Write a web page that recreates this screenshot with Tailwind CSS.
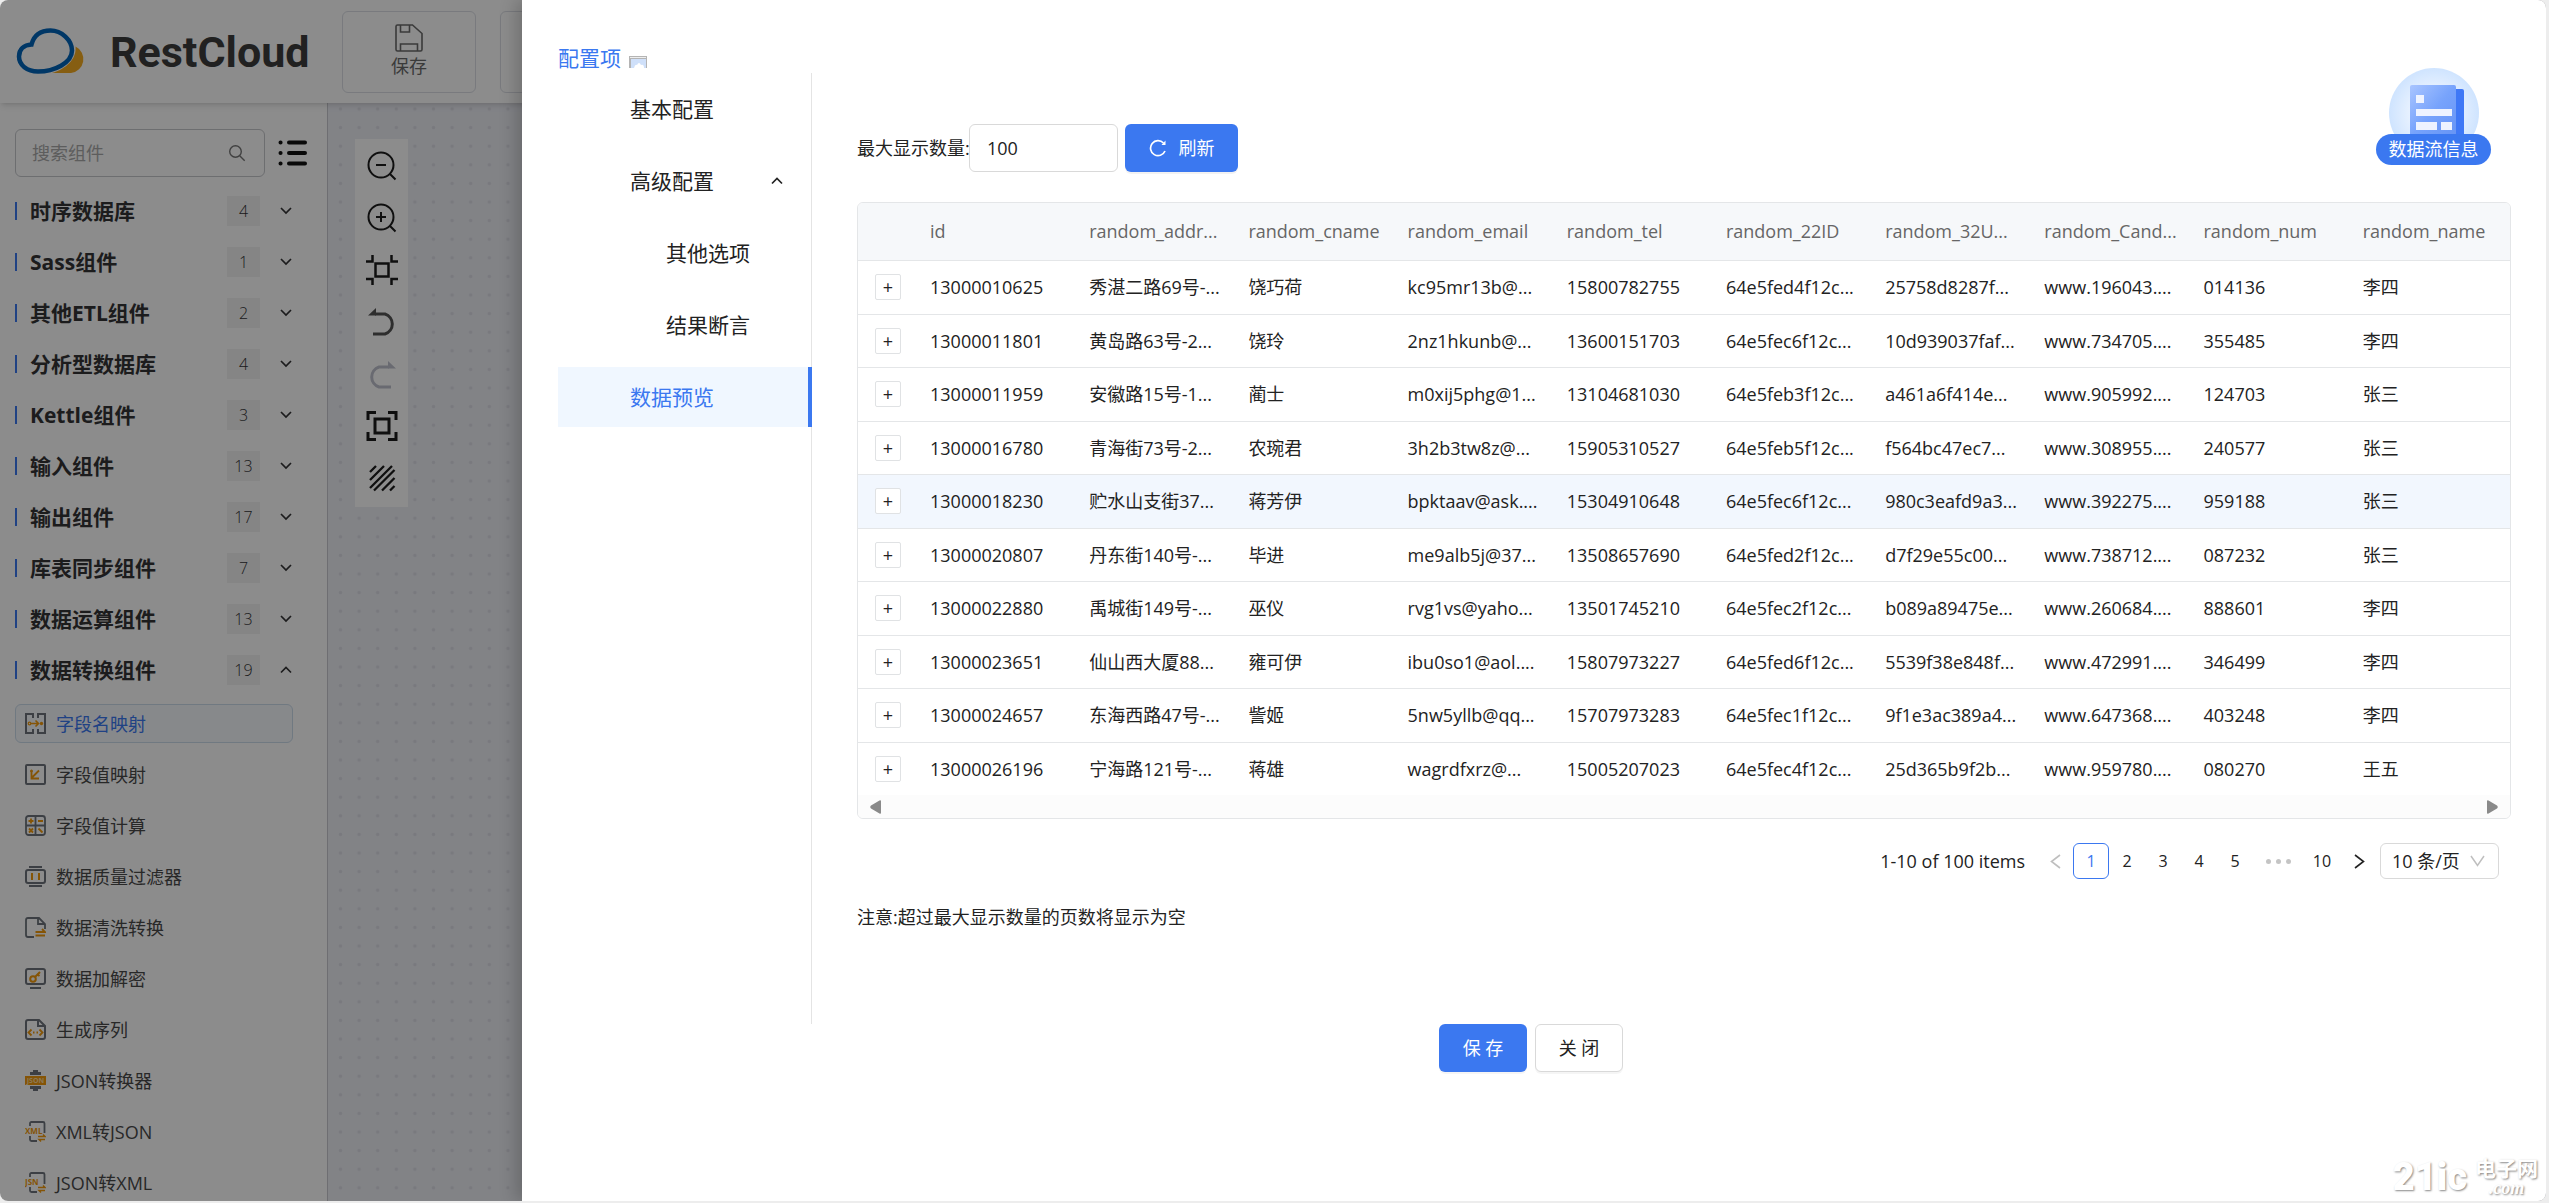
<!DOCTYPE html>
<html lang="zh-CN">
<head>
<meta charset="utf-8">
<title>RestCloud</title>
<script src="https://cdn.jsdelivr.net/npm/@tailwindcss/browser@4"></script>
</head>
<body class="h-screen overflow-hidden bg-[#ededed] pr-[3px] pb-[2px] font-['Open_Sans','Noto_Sans_CJK_SC',sans-serif] text-[18px] leading-7 text-[#222]">
<svg class="hidden">
  <symbol id="down" viewBox="0 0 12 12"><path d="M1 3l5 5 5-5" fill="none" stroke="currentColor" stroke-width="1.700"/></symbol>
  <symbol id="up" viewBox="0 0 12 12"><path d="M1 8.500l5-5 5 5" fill="none" stroke="currentColor" stroke-width="1.700"/></symbol>
</svg>
<div class="relative h-full overflow-hidden rounded-lg bg-white">

  <!-- Application behind the drawer -->
  <div class="flex h-full flex-col">
    <header class="z-10 flex h-[103px] shrink-0 items-center bg-white shadow-md">
      <a href="#" class="flex w-[342px] items-center pl-4">
        <svg class="h-[50px] w-[72px] shrink-0" viewBox="0 0 72 50">
          <path d="M36 46h19a14 14 0 0 0 4.500-26.500C61 32 50 42 36 46z" fill="#f5ab22"/>
          <path d="M22 44.500C11 44.500 3 38 3 29.500 3 22 8 18 15.500 17.500 18 8 25 3.500 34.500 3.500c11 0 21.500 9.500 21.500 20C56 36 38 44.500 22 44.500z" fill="#fff" stroke="#0064bb" stroke-width="4.500"/>
        </svg>
        <span class="ml-[22px] font-['Roboto',sans-serif] text-[43px] leading-[50px] font-bold text-[#3c3c3c]">RestCloud</span>
      </a>
      <button class="flex h-[82px] w-[134px] shrink-0 flex-col items-center justify-center rounded-md border border-[#dcdfe6] text-[#6b6b6b]">
        <svg class="h-7 w-7" viewBox="0 0 28 28" fill="none" stroke="currentColor" stroke-width="1.600"><path d="M1 2.500Q1 1 2.500 1h15L27 9.500V25.500Q27 27 25.500 27h-23Q1 27 1 25.500zM5.500 1v7h9V1M5.500 27v-7h17v7"/></svg>
        保存
      </button>
      <button class="ml-6 h-[82px] w-[134px] shrink-0 rounded-md border border-[#dcdfe6]" aria-label="操作"></button>
    </header>
    <div class="flex min-h-0 flex-1">
      <aside class="w-[328px] shrink-0 overflow-hidden border-r border-[#c8c9cf] bg-white px-[15px] pt-[26px]">
        <div class="flex items-center gap-[13px]">
          <label class="flex h-12 w-[250px] items-center rounded-md border border-[#c6c8cc] pr-[18px] pl-4 text-[#777]">
            <input type="text" placeholder="搜索组件" aria-label="搜索组件" class="min-w-0 flex-1 outline-none placeholder:text-[#aaa]">
            <svg class="h-[18px] w-[18px]" viewBox="0 0 18 18" fill="none" stroke="currentColor" stroke-width="1.400"><circle cx="7.500" cy="7.500" r="5.800"/><path d="M11.700 11.700l5 5"/></svg>
          </label>
          <button aria-label="列表"><svg class="h-[26px] w-[29px]" viewBox="0 0 29 26" stroke="#111" stroke-width="4" stroke-linecap="round"><path d="M2.500 2.500h.1M11 2.500h16M2.500 13h.1M11 13h16M2.500 23.500h.1M11 23.500h16"/></svg></button>
        </div>
        <ul class="mt-2 text-[21px] font-bold text-[#343436] [&>li]:flex [&>li]:h-[51px] [&>li]:items-center [&_b]:mr-[13px] [&_b]:h-[18px] [&_b]:w-[2px] [&_b]:bg-[#3b78f0] [&_i]:ml-auto [&_i]:mr-5 [&_i]:w-[33px] [&_i]:bg-[#f2f2f2] [&_i]:text-center [&_i]:text-[16px] [&_i]:leading-[30px] [&_i]:font-light [&_i]:not-italic [&_svg]:mr-5 [&_svg]:h-3 [&_svg]:w-3">
          <li><b></b>时序数据库<i>4</i><svg><use href="#down"/></svg></li>
          <li><b></b>Sass组件<i>1</i><svg><use href="#down"/></svg></li>
          <li><b></b>其他ETL组件<i>2</i><svg><use href="#down"/></svg></li>
          <li><b></b>分析型数据库<i>4</i><svg><use href="#down"/></svg></li>
          <li><b></b>Kettle组件<i>3</i><svg><use href="#down"/></svg></li>
          <li><b></b>输入组件<i>13</i><svg><use href="#down"/></svg></li>
          <li><b></b>输出组件<i>17</i><svg><use href="#down"/></svg></li>
          <li><b></b>库表同步组件<i>7</i><svg><use href="#down"/></svg></li>
          <li><b></b>数据运算组件<i>13</i><svg><use href="#down"/></svg></li>
          <li><b></b>数据转换组件<i>19</i><svg><use href="#up"/></svg></li>
        </ul>
        <ul class="mt-[9px] flex flex-col gap-3 text-[#4a4a4a] [&>li]:flex [&>li]:h-[39px] [&>li]:w-[278px] [&>li]:items-center [&>li]:gap-[10px] [&>li]:rounded-md [&>li]:border [&>li]:border-transparent [&>li]:px-[9px] [&_svg]:h-[21px] [&_svg]:w-[21px]">
          <li class="border-[#ccdcec]! bg-[#f6f9fd] text-[#3b78f0]"><svg viewBox="0 0 21 21" fill="none" stroke="#6d747c" stroke-width="2"><path d="M8 5V1H1v19h7v-4M13 5V1h7v19h-7v-4"/><path d="M5.500 10.500h7M10.500 7.500l3 3-3 3" stroke="#f29a0c" stroke-width="1.600"/><circle cx="4.500" cy="10.500" r="1.300" stroke="#f29a0c" stroke-width="1.200"/><circle cx="16.500" cy="10.500" r="1.700" fill="#f29a0c" stroke="none"/></svg>字段名映射</li>
          <li><svg viewBox="0 0 21 21" fill="none" stroke="#6d747c" stroke-width="2"><rect x="1" y="1" width="19" height="19" rx="1"/><path d="M6.500 14L14 6.500M6.500 7v7.500H14" stroke="#f29a0c" stroke-width="1.800"/><circle cx="6.500" cy="7" r="1" fill="#f29a0c" stroke="#f29a0c" stroke-width="1"/></svg>字段值映射</li>
          <li><svg viewBox="0 0 21 21" fill="none" stroke="#6d747c" stroke-width="1.800"><rect x="1" y="1" width="19" height="19" rx="2.500"/><path d="M10.500 1v19M1 10.500h19"/><path d="M3.500 6h5M6 3.500v5M13 6h5M4 13.500l4 4M8 13.500l-4 4M13.500 13.500l4 4" stroke="#f29a0c"/></svg>字段值计算</li>
          <li><svg viewBox="0 0 21 21" fill="none" stroke="#6d747c" stroke-width="2"><path d="M4 1h13M4 20h13"/><rect x="1" y="4" width="19" height="13" rx="2"/><path d="M7 7v7M14 7v7" stroke="#f29a0c"/></svg>数据质量过滤器</li>
          <li><svg viewBox="0 0 21 21" fill="none" stroke="#6d747c" stroke-width="1.800"><path d="M9 20H3q-2 0-2-2V3q0-2 2-2h11l6 6v5M13 1v6h7"/><path d="M10.500 15H20l-3-3M20 18.500h-9.500" stroke="#f29a0c"/></svg>数据清洗转换</li>
          <li><svg viewBox="0 0 21 21" fill="none" stroke="#6d747c" stroke-width="2"><rect x="1" y="1" width="19" height="15" rx="2"/><path d="M5 20h11"/><circle cx="8" cy="11" r="2.800" stroke="#f29a0c"/><path d="M10 9l5-5M12.500 6.500l2 1.500" stroke="#f29a0c"/></svg>数据加解密</li>
          <li><svg viewBox="0 0 21 21" fill="none" stroke="#6d747c" stroke-width="2"><path d="M3 1h11l6 6v11q0 2-2 2H3q-2 0-2-2V3q0-2 2-2zM13 1v6h7"/><path d="M6.500 10.500l-3 3 3 3M14.500 10.500l3 3-3 3M8 13.500h1.500M11.500 13.500H13" stroke="#f29a0c" stroke-width="1.800"/></svg>生成序列</li>
          <li><svg viewBox="0 0 21 21"><path d="M8 0h5v2h3v3H5V2h3zM5 16h11v3h-3v2H8v-2H5z" fill="#6d747c"/><path d="M0 6h21v9H0z" fill="#f29a0c"/><text x="10.500" y="13.200" text-anchor="middle" font-size="7" font-weight="bold" fill="#ffdca0">JSON</text></svg>JSON转换器</li>
          <li><svg viewBox="0 0 21 21" fill="none" stroke="#6d747c" stroke-width="1.800"><path d="M5 5V2.500Q5 1 6.500 1H18q1.500 0 1.500 1.500V12M5 15v3.500Q5 20 6.500 20H12"/><path d="M13 15.500h7l-2-2M20 18.500h-6l2 2" stroke="#f29a0c" stroke-width="1.400"/><text x="0" y="13" font-size="8" font-weight="bold" fill="#f29a0c" stroke="none">XML</text></svg>XML转JSON</li>
          <li><svg viewBox="0 0 21 21" fill="none" stroke="#6d747c" stroke-width="1.800"><path d="M5 5V2.500Q5 1 6.500 1H18q1.500 0 1.500 1.500V12M5 15v3.500Q5 20 6.500 20H12"/><path d="M13 15.500h7l-2-2M20 18.500h-6l2 2" stroke="#f29a0c" stroke-width="1.400"/><text x="0" y="13" font-size="8" font-weight="bold" fill="#f29a0c" stroke="none">JSN</text></svg>JSON转XML</li>
        </ul>
      </aside>
      <main class="relative flex-1 bg-[#edeef5]">
        <svg class="absolute inset-0 h-full w-full"><defs><pattern id="dots" x="3.200" y="-3.300" width="18.600" height="18.600" patternUnits="userSpaceOnUse"><circle cx="9.300" cy="9.300" r="1.700" fill="#dcdde5"/></pattern></defs><rect width="100%" height="100%" fill="url(#dots)"/></svg>
        <div class="absolute top-9 left-[27px] flex w-[53px] flex-col items-center gap-[22px] bg-white pt-3 pb-[14px] text-[#1c1c1c] [&_svg]:h-[30px] [&_svg]:w-[32px]">
          <button aria-label="缩小"><svg viewBox="0 0 32 30" fill="none" stroke="currentColor" stroke-width="2"><circle cx="15" cy="14" r="12.500"/><path d="M10 14h10M23.500 22.500l6 6"/></svg></button>
          <button aria-label="放大"><svg viewBox="0 0 32 30" fill="none" stroke="currentColor" stroke-width="2"><circle cx="15" cy="14" r="12.500"/><path d="M10 14h10M15 9v10M23.500 22.500l6 6"/></svg></button>
          <button aria-label="适应画布"><svg viewBox="0 0 32 30" fill="none" stroke="currentColor" stroke-width="2.500"><rect x="9.500" y="8.500" width="13" height="13"/><path d="M0 6.500h6.500V0M32 6.500h-6.500V0M0 24h6.500v6M32 24h-6.500v6"/></svg></button>
          <button aria-label="撤销"><svg viewBox="0 0 32 30" class="text-[#555]"><path d="M7 27h12a10.500 10.500 0 0 0 0-20H9" fill="none" stroke="currentColor" stroke-width="3"/><path d="M2 8.500L10 1v7.500z" fill="currentColor"/></svg></button>
          <button aria-label="重做"><svg viewBox="0 0 32 30" class="text-[#bfc2ce]"><path d="M25 28H13a10.500 10.500 0 0 1 0-20h10" fill="none" stroke="currentColor" stroke-width="3"/><path d="M30 9.500L22 2v7.500z" fill="currentColor"/></svg></button>
          <button aria-label="全屏"><svg viewBox="0 0 32 30" fill="none" stroke="currentColor" stroke-width="3"><rect x="9" y="8" width="14" height="14"/><path d="M2 9V1.500h8M30 9V1.500h-8M2 21v7.500h8M30 21v7.500h-8"/></svg></button>
          <button aria-label="网格"><svg viewBox="0 0 32 30" fill="none" stroke="currentColor" stroke-width="2.300"><path d="M4 9l6-6M4 17L18 3M4 25L26 3M8 27.500L28.500 7M16 27.500L28.500 15M24 27.500l4.500-4.500"/></svg></button>
        </div>
      </main>
    </div>
  </div>
  <div class="absolute inset-0 z-20 bg-black/45"></div>

  <!-- Configuration drawer -->
  <section class="absolute inset-y-0 right-0 left-[522px] z-30 bg-white pl-9 shadow-[-6px_0_16px_rgba(0,0,0,0.2)]">
    <h2 class="flex items-center gap-2 pt-[43px] text-[21px] leading-[30px] text-[#3b78f0]">配置项
      <svg class="mt-2 h-3 w-[18px]" viewBox="0 0 18 12"><path d="M0 0h18v12H0z" fill="#b4b4b4"/><path d="M2 3h15v9H2z" fill="#cfe0fa"/><path d="M5 12q1-4 3-3 2-4 4 0 3-1 3 3z" fill="#fff"/><path d="M1 1h16v1H1z" fill="#eee"/></svg>
    </h2>
    <div class="flex min-h-[951px]">
      <nav class="w-[254px] shrink-0 border-r border-[#e4e4e4] pt-1.5 text-[21px]">
        <ul class="-mr-px flex flex-col gap-3 [&_a]:flex [&_a]:h-[60px] [&_a]:items-center [&_a]:pl-[72px]">
          <li><a href="#">基本配置</a></li>
          <li><a href="#">高级配置<svg class="mr-[29px] ml-auto h-3 w-3"><use href="#up"/></svg></a></li>
          <li><a href="#" class="pl-[108px]!">其他选项</a></li>
          <li><a href="#" class="pl-[108px]!">结果断言</a></li>
          <li><a href="#" class="border-r-4 border-[#3b78f0] bg-[#f0f7ff] text-[#3b78f0]">数据预览</a></li>
        </ul>
      </nav>
      <div class="min-w-0 flex-1 pt-[51px] pr-[35px] pl-[45px]">
        <div class="flex items-center">
          <label for="max" class="w-[112px] whitespace-nowrap">最大显示数量:</label>
          <input id="max" type="text" value="100" class="h-12 w-[149px] rounded-md border border-[#d9d9d9] px-[17px]">
          <button class="ml-[7px] flex h-12 w-[113px] items-center justify-center gap-3 rounded-md bg-[#3b78f0] text-white shadow-[0_2px_0_rgba(0,0,0,0.05)]">
            <svg class="h-[18px] w-[18px]" viewBox="0 0 18 18" fill="none" stroke="currentColor" stroke-width="1.700"><path d="M16 12A7.500 7.500 0 1 1 14.500 4"/><path d="M16.500 1.500V6h-4z" fill="currentColor" stroke="none"/></svg>刷新
          </button>
        </div>
        <div class="mt-[30px] overflow-hidden rounded-md border border-[#e4e6e8]">
          <table class="w-full table-fixed text-left whitespace-nowrap [&_td]:px-3 [&_th]:px-3 [&_th]:font-normal [&_tbody>tr]:h-[53px] [&_tbody>tr:nth-child(odd)]:h-[54px] [&_tbody>tr]:border-t [&_tbody>tr]:border-[#e4e6e8] [&_button]:mx-auto [&_button]:flex [&_button]:h-[26px] [&_button]:w-[26px] [&_button]:items-center [&_button]:justify-center [&_button]:rounded-xs [&_button]:border [&_button]:border-[#e0e2e4] [&_button]:bg-white">
            <thead class="bg-[#f6f8fa] text-[#666]">
              <tr class="h-[57px]"><th class="w-[60px]"></th><th>id</th><th>random_addr...</th><th>random_cname</th><th>random_email</th><th>random_tel</th><th>random_22ID</th><th>random_32U...</th><th>random_Cand...</th><th>random_num</th><th>random_name</th></tr>
            </thead>
            <tbody>
              <tr><td><button>+</button></td><td>13000010625</td><td>秀湛二路69号-...</td><td>饶巧荷</td><td>kc95mr13b@...</td><td>15800782755</td><td>64e5fed4f12c...</td><td>25758d8287f...</td><td>www.196043....</td><td>014136</td><td>李四</td></tr>
              <tr><td><button>+</button></td><td>13000011801</td><td>黄岛路63号-2...</td><td>饶玲</td><td>2nz1hkunb@...</td><td>13600151703</td><td>64e5fec6f12c...</td><td>10d939037faf...</td><td>www.734705....</td><td>355485</td><td>李四</td></tr>
              <tr><td><button>+</button></td><td>13000011959</td><td>安徽路15号-1...</td><td>蔺士</td><td>m0xij5phg@1...</td><td>13104681030</td><td>64e5feb3f12c...</td><td>a461a6f414e...</td><td>www.905992....</td><td>124703</td><td>张三</td></tr>
              <tr><td><button>+</button></td><td>13000016780</td><td>青海街73号-2...</td><td>农琬君</td><td>3h2b3tw8z@...</td><td>15905310527</td><td>64e5feb5f12c...</td><td>f564bc47ec7...</td><td>www.308955....</td><td>240577</td><td>张三</td></tr>
              <tr class="bg-[#f2f7fe]"><td><button>+</button></td><td>13000018230</td><td>贮水山支街37...</td><td>蒋芳伊</td><td>bpktaav@ask....</td><td>15304910648</td><td>64e5fec6f12c...</td><td>980c3eafd9a3...</td><td>www.392275....</td><td>959188</td><td>张三</td></tr>
              <tr><td><button>+</button></td><td>13000020807</td><td>丹东街140号-...</td><td>毕进</td><td>me9alb5j@37...</td><td>13508657690</td><td>64e5fed2f12c...</td><td>d7f29e55c00...</td><td>www.738712....</td><td>087232</td><td>张三</td></tr>
              <tr><td><button>+</button></td><td>13000022880</td><td>禹城街149号-...</td><td>巫仪</td><td>rvg1vs@yaho...</td><td>13501745210</td><td>64e5fec2f12c...</td><td>b089a89475e...</td><td>www.260684....</td><td>888601</td><td>李四</td></tr>
              <tr><td><button>+</button></td><td>13000023651</td><td>仙山西大厦88...</td><td>雍可伊</td><td>ibu0so1@aol....</td><td>15807973227</td><td>64e5fed6f12c...</td><td>5539f38e848f...</td><td>www.472991....</td><td>346499</td><td>李四</td></tr>
              <tr><td><button>+</button></td><td>13000024657</td><td>东海西路47号-...</td><td>訾姬</td><td>5nw5yllb@qq...</td><td>15707973283</td><td>64e5fec1f12c...</td><td>9f1e3ac389a4...</td><td>www.647368....</td><td>403248</td><td>李四</td></tr>
              <tr><td><button>+</button></td><td>13000026196</td><td>宁海路121号-...</td><td>蒋雄</td><td>wagrdfxrz@...</td><td>15005207023</td><td>64e5fec4f12c...</td><td>25d365b9f2b...</td><td>www.959780....</td><td>080270</td><td>王五</td></tr>
            </tbody>
          </table>
          <div class="flex h-[23px] items-center justify-between bg-[#fcfcfc] px-3 text-[#8a8a8a]">
            <svg class="h-[14px] w-[11px]" viewBox="0 0 11 14"><path d="M11 1.500v11q0 2-1.500 1L1 8.500Q-.5 7 1 5.500L9.500.5Q11-.5 11 1.500z" fill="currentColor"/></svg>
            <svg class="h-[14px] w-[11px]" viewBox="0 0 11 14"><path d="M0 1.500v11q0 2 1.500 1L10 8.500q1.500-1.500 0-3L1.500.5Q0-.5 0 1.500z" fill="currentColor"/></svg>
          </div>
        </div>
        <div class="mt-6 flex h-9 items-center justify-end pr-3">
          <span class="mr-3">1-10 of 100 items</span>
          <div class="flex h-9 text-[16px] [&>button]:flex [&>button]:w-9 [&>button]:items-center [&>button]:justify-center [&_svg]:h-[15px] [&_svg]:w-[11px]">
            <button aria-label="上一页" class="text-[#bfbfbf]"><svg viewBox="0 0 11 15" fill="none" stroke="currentColor" stroke-width="1.600"><path d="M10 1L1.500 7.500 10 14"/></svg></button>
            <button class="rounded-md border border-[#3b78f0] text-[#3b78f0]">1</button>
            <button>2</button><button>3</button><button>4</button><button>5</button>
            <span class="flex w-[50px] items-center justify-center gap-[5px] [&>i]:h-[5px] [&>i]:w-[5px] [&>i]:rounded-full [&>i]:bg-[#c4c4c4]"><i></i><i></i><i></i></span>
            <button class="w-[38px]!">10</button>
            <button aria-label="下一页"><svg viewBox="0 0 11 15" fill="none" stroke="currentColor" stroke-width="1.600"><path d="M1 1l8.500 6.500L1 14"/></svg></button>
          </div>
          <div class="relative ml-[3px]">
            <select aria-label="每页条数" class="block h-9 w-[119px] appearance-none rounded-md border border-[#d9d9d9] bg-white pl-[11px] leading-7"><option>10 条/页</option></select>
            <svg class="pointer-events-none absolute top-3 right-[14px] h-3 w-[15px] text-[#bfbfbf]" viewBox="0 0 15 12" fill="none" stroke="currentColor" stroke-width="1.500"><path d="M1 1l6.500 9.500L14 1"/></svg>
          </div>
        </div>
        <p class="mt-6">注意:超过最大显示数量的页数将显示为空</p>
      </div>
    </div>
    <footer class="flex justify-center gap-2 pr-[42px] [&>button]:h-12 [&>button]:w-[88px] [&>button]:rounded-md [&>button]:shadow-[0_2px_0_rgba(0,0,0,0.04)]">
      <button class="bg-[#3b78f0] text-white">保 存</button>
      <button class="border border-[#d9d9d9] bg-white">关 闭</button>
    </footer>

    <button class="absolute top-[68px] right-[55px] flex w-[115px] flex-col items-center">
      <svg class="h-[66px] w-[90px]" viewBox="0 0 90 66">
        <defs>
          <radialGradient id="halo"><stop offset=".4" stop-color="#eef5ff"/><stop offset="1" stop-color="#cfe4ff"/></radialGradient>
          <linearGradient id="sheet" x1="0" y1="0" x2="1" y2="1"><stop offset="0" stop-color="#a9c5ff"/><stop offset=".5" stop-color="#77a3fc"/><stop offset="1" stop-color="#6694f5"/></linearGradient>
        </defs>
        <circle cx="45" cy="45" r="45" fill="url(#halo)"/>
        <rect x="60" y="21" width="15" height="50" rx="2" fill="#3f78f6"/>
        <rect x="21" y="17" width="46" height="52" rx="2" fill="url(#sheet)"/>
        <path d="M27 27h8v8h-8zM27 41h36v7H27zM27 54h21v8H27zM52 54h11v8H52z" fill="#eef3ff"/>
      </svg>
      <span class="h-[31px] w-full rounded-full bg-[#3b78f0] leading-[31px] text-white">数据流信息</span>
    </button>

    <div class="absolute right-2 bottom-1 flex items-center gap-2 font-bold text-white [text-shadow:1px_1px_2px_#888]">
      <span class="font-['Roboto',sans-serif] text-[38px] leading-9 font-black">21ic</span>
      <span class="flex flex-col"><span class="text-[21px] leading-[22px]">电子网</span><span class="text-center font-['Liberation_Serif',serif] text-[18px] leading-[18px] italic">.com</span></span>
    </div>
  </section>
</div>
</body>
</html>
